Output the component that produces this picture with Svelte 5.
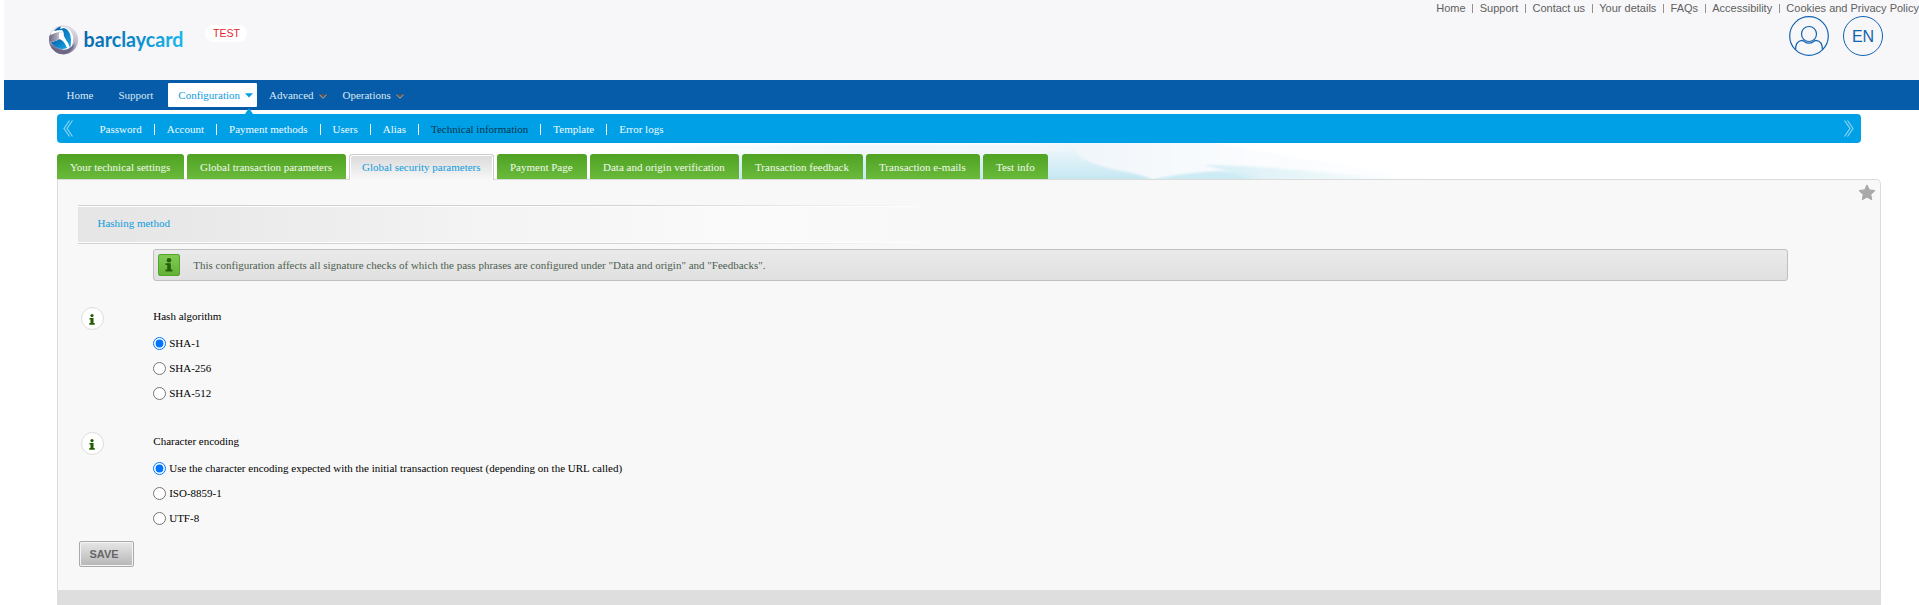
<script>
  const topLinks = ['Home', 'Support', 'Contact us', 'Your details', 'FAQs', 'Accessibility', 'Cookies and Privacy Policy'];
  const subItems = ['Password', 'Account', 'Payment methods', 'Users', 'Alias', 'Technical information', 'Template', 'Error logs'];
  const tabs = [
    { name: 'Your technical settings', width: 127 },
    { name: 'Global transaction parameters', width: 159 },
    { name: 'Global security parameters', width: 145, active: true },
    { name: 'Payment Page', width: 90 },
    { name: 'Data and origin verification', width: 149 },
    { name: 'Transaction feedback', width: 121 },
    { name: 'Transaction e-mails', width: 114 },
    { name: 'Test info', width: 65 }
  ];
  const groups = [
    { id: 'hash', title: 'Hash algorithm', options: ['SHA-1', 'SHA-256', 'SHA-512'] },
    {
      id: 'encoding',
      title: 'Character encoding',
      options: [
        'Use the character encoding expected with the initial transaction request (depending on the URL called)',
        'ISO-8859-1',
        'UTF-8'
      ]
    }
  ];
  let chosen = $state({ hash: 'SHA-1', encoding: groups[1].options[0] });
</script>

{#snippet arrow()}
  <svg class="arrow" width="8" height="5" viewBox="0 0 8 5"><path d="M.6 .3h6.8L4 4.2z" fill="#555" /><path d="M.4 .6L4 4.300 7.600 .6" fill="none" stroke="#d3b08e" stroke-width=".9" /></svg>
{/snippet}

<div class="page">
  <header>
    <svg class="logo" width="138" height="32" viewBox="0 0 138 32" role="img" aria-label="barclaycard">
      <defs>
        <linearGradient id="silver" x1=".7" y1="0" x2=".4" y2="1">
          <stop offset="0" stop-color="#e6e4ec" /><stop offset=".5" stop-color="#bbb7c8" /><stop offset="1" stop-color="#625d7b" />
        </linearGradient>
        <linearGradient id="wing" x1="0" y1="0" x2="1" y2="0">
          <stop offset="0" stop-color="#6b6682" /><stop offset="1" stop-color="#dddbe4" />
        </linearGradient>
        <linearGradient id="blue" x1="0" y1="0" x2="1" y2="1">
          <stop offset="0" stop-color="#075aa8" /><stop offset="1" stop-color="#12a8e4" />
        </linearGradient>
        <linearGradient id="word" x1="0" y1="0" x2="1" y2=".15">
          <stop offset="0" stop-color="#0864ab" /><stop offset=".55" stop-color="#0786c6" /><stop offset="1" stop-color="#1ab4ea" />
        </linearGradient>
      </defs>
      <circle cx="15.500" cy="15.800" r="14.600" fill="url(#silver)" />
      <path d="M3 9Q7 3 14 3q8 0 11 9 1 8-3 13-4 2-9 0-7-2-11-8l1-4z" fill="#fff" />
      <path d="M6 7q3-4 7-4.500L12 5l4-1q4 1 6 6 2 7 0 15-1-7-7-12 2-4-1-7-4 0-8 1z" fill="url(#blue)" />
      <path d="M3 18q6-1 8-3 5 1 8 9-5 2-9 0-5-2-7-6z" fill="url(#blue)" />
      <path d="M1.200 12q5-4 14-4.500Q11 11 11 15q-4 3.500-9.600 2.500z" fill="url(#wing)" />
      <path d="M11.500 8q2 0 3.500 2 3 5 3.500 9Q14 15 11 14.500q-1-3 .5-6.500z" fill="#fff" />
      <path d="M2 20q6 6 13 6 7 0 12-7-3 10.500-12 11Q6 30 2 20z" fill="#6c6787" />
      <text x="35.500" y="23" textLength="100" lengthAdjust="spacingAndGlyphs" fill="url(#word)">barclaycard</text>
    </svg>
    <span class="test">TEST</span>
    <div class="account">
      <nav class="top">
        {#each topLinks as link}<a href="#top">{link}</a>{/each}
      </nav>
      <div class="rounds">
        <svg width="40" height="40" viewBox="0 0 40 40" fill="none" stroke="#1264b0" stroke-width="1.2">
          <circle cx="20" cy="20" r="19.3" />
          <circle cx="20" cy="18" r="7.5" />
          <path d="M6.500 34c0-6 2.500-9.200 6.500-9.600 2 0 3 2.800 7 2.800s5-2.800 7-2.800c4 .4 6.500 3.600 6.500 9.600" />
        </svg>
        <span class="lang">EN</span>
      </div>
    </div>
  </header>

  <nav class="main">
    <a class="home" href="#top">Home</a>
    <a class="support" href="#top">Support</a>
    <a class="config" href="#top">Configuration<svg width="8" height="5" viewBox="0 0 8 5"><path d="M0 .3h8L4 4.500z" fill="#00a0e6" /></svg></a>
    <a class="adv" href="#top">Advanced{@render arrow()}</a>
    <a class="ops" href="#top">Operations{@render arrow()}</a>
  </nav>

  <nav class="sub">
    <svg class="pointer" width="8" height="6" viewBox="0 0 8 6"><path d="M4 0L8 6H0z" fill="#00a0e6" /></svg>
    <svg class="chev" width="10" height="17" viewBox="0 0 10 17"><path d="M6.500 .5L1 8.500l5.500 8M9.500 .5L4 8.500l5.500 8" /></svg>
    <ul>
      {#each subItems as item}
        <li><a class:current={item === 'Technical information'} href="#top">{item}</a></li>
      {/each}
    </ul>
    <svg class="chev" width="10" height="17" viewBox="0 0 10 17"><path d="M3.500 .5L9 8.500l-5.500 8M.5 .5L6 8.500l-5.500 8" /></svg>
  </nav>

  <div class="tabs">
    <svg class="sky" width="900" height="36" viewBox="0 0 900 36">
      <defs>
        <linearGradient id="haze" x1="0" y1="0" x2="1" y2="0">
          <stop offset="0" stop-color="#fff" /><stop offset=".3" stop-color="#f1f8fb" /><stop offset=".56" stop-color="#f1f6fa" /><stop offset=".75" stop-color="#fafcfe" /><stop offset="1" stop-color="#fff" />
        </linearGradient>
        <linearGradient id="wave" gradientUnits="userSpaceOnUse" x1="0" y1="4" x2="0" y2="36">
          <stop offset="0" stop-color="#eef7fb" /><stop offset="1" stop-color="#c5e7f2" />
        </linearGradient>
        <linearGradient id="fade" x1="0" y1="0" x2="1" y2="0">
          <stop offset="0" stop-color="#cdebf4" /><stop offset=".4" stop-color="#e2f4f8" /><stop offset="1" stop-color="#fff" />
        </linearGradient>
        <filter id="soft" x="-5%" y="-30%" width="110%" height="160%"><feGaussianBlur stdDeviation="1.300" /></filter>
      </defs>
      <path d="M0 40V8Q140 0 330 1T520 -4h110q80 20 270 44z" fill="url(#haze)" filter="url(#soft)" />
      <path d="M60 40V14h400l40-12 7 12q14 8 36 13 20 3 36 9v4z" fill="url(#wave)" filter="url(#soft)" />
      <path d="M582 40v-4q26-6 66-8 30 2 46 12z" fill="#cdebf4" filter="url(#soft)" />
      <path d="M630 22q70 0 220 18H680q-20-12-50-18z" fill="url(#fade)" opacity=".8" filter="url(#soft)" />
    </svg>
    {#each tabs as tab}
      <a class="tab" class:active={tab.active} href="#top" style:width="{tab.width}px">{tab.name}</a>
    {/each}
  </div>

  <main>
    <svg class="star" width="18" height="17" viewBox="0 0 18 17"><path d="M9 1.200l2.300 4.700 5.200.8-3.800 3.600.9 5.200L9 13l-4.600 2.500.9-5.200L1.500 6.700l5.200-.8z" fill="#a9a9a9" stroke="#a9a9a9" stroke-width="1.200" stroke-linejoin="round" /></svg>
    <h2><span>Hashing method</span></h2>
    <div class="notice">
      <span class="badge"><svg width="8" height="14" viewBox="0 0 8 14"><circle cx="4" cy="2.300" r="2.300" /><path d="M.5 5.200h5.300v6.300h1.600V13.500H.5v-2h1.700V7H.5z" /></svg></span>
      This configuration affects all signature checks of which the pass phrases are configured under "Data and origin" and "Feedbacks".
    </div>
    {#each groups as group}
      <section>
        <span class="info"><svg width="6" height="11" viewBox="0 0 6 11"><circle cx="3" cy="1.600" r="1.600" /><path d="M.5 4h4v5h1.200v1.800H.3V9h1.200V5.600h-1z" /></svg></span>
        <div class="fields">
          <h3>{group.title}</h3>
          {#each group.options as option}
            <label><input type="radio" name={group.id} value={option} bind:group={chosen[group.id]} />{option}</label>
          {/each}
        </div>
      </section>
    {/each}
    <button type="button">SAVE</button>
    <div class="foot"></div>
  </main>
</div>

<style>
  :global(body) { margin: 0; background: #fff; overflow: hidden; }
  .page { width: 1919px; height: 605px; overflow: hidden; box-sizing: border-box; padding-left: 4px; background: #fff; font: 11px/13px "Liberation Serif", "Times New Roman", serif; color: #000; }
  a { color: inherit; text-decoration: none; white-space: nowrap; }
  svg { display: block; flex: none; }

  header { height: 80px; background: #f7f7f9; display: flex; align-items: flex-start; }
  .logo { margin: 24px 0 0 44px; }
  .logo text { font: 700 20px Lato, sans-serif; }
  .test { margin: 25px 0 0 19px; width: 42px; height: 17px; border-radius: 9px; background: #fff; color: #e2262f; font: 10.600px/17px "Liberation Sans", Arial, sans-serif; text-align: center; text-indent: 1px; }
  .account { margin-left: auto; font-family: "Liberation Sans", Arial, sans-serif; }
  .top { display: flex; height: 16px; align-items: center; justify-content: flex-end; color: #606060; }
  .top a + a { display: flex; align-items: center; }
  .top a + a::before { content: ""; width: 1px; height: 9px; margin: 0 6.500px 0 6.700px; background: #919191; }
  .rounds { display: flex; gap: 14px; justify-content: flex-end; padding-right: 36px; }
  .lang { width: 40px; height: 40px; box-sizing: border-box; border: 1.200px solid #1264b0; border-radius: 50%; color: #1264b0; font-size: 16px; line-height: 40px; text-align: center; }

  .main { height: 30px; background: #065ca8; color: #d9e8f5; display: flex; align-items: center; }
  .main a { display: flex; align-items: center; height: 24px; }
  .home { margin-left: 62.500px; width: 52px; }
  .support { width: 49.500px; }
  .config { box-sizing: border-box; width: 89px; padding-left: 10.300px; background: #fff; color: #0e9cdc; border-radius: 1px; }
  .config svg { margin: 1px 0 0 4.600px; }
  .adv { margin-left: 12px; width: 73.500px; }
  .arrow { margin: 2px 0 0 5px; }

  .sub { position: relative; display: flex; align-items: center; margin: 4px 58px 0 53px; height: 29px; box-sizing: border-box; padding: 0 7px 0 6px; border-radius: 4px; background: #00a0e6; color: #f2faff; }
  .pointer { position: absolute; left: 188px; top: -6px; }
  .chev { fill: none; stroke: #8ad3f4; stroke-width: 1.200; }
  .sub ul { display: flex; flex: 1; align-items: center; list-style: none; margin: 2px 0 0 14.500px; padding: 0; }
  .sub li { display: flex; align-items: center; padding-left: 12px; }
  .sub li:not(:last-child)::after { content: ""; width: 1px; height: 11px; margin-left: 12.050px; background: #fff; }
  .current { color: #06364f; }

  .tabs { position: relative; display: flex; gap: 3px; height: 36px; padding: 11px 0 0 53px; box-sizing: border-box; }
  .sky { position: absolute; left: 569px; top: 0; }
  .tab { position: relative; height: 25px; box-sizing: border-box; padding: 7px 0 0 13px; border-radius: 3px 3px 0 0; background: linear-gradient(#4fa222, #6aba3c); color: #f2f9ee; }
  .tab.active { height: 26px; z-index: 1; padding: 6px 0 0 12px; border: 1px solid #ccc; border-bottom: 0; background: linear-gradient(#dbd9da, #f8f8f8); box-shadow: inset 1px 1px #fff, inset -1px 0 #fff; color: #0e9cdc; }

  main { position: relative; margin: 0 38px 0 53px; height: 426px; box-sizing: border-box; border: 1px solid #dbdbdb; border-top-right-radius: 5px; border-bottom: 0; background: #f8f8f8; padding: 25px 20px 0; display: flex; flex-direction: column; }
  .star { position: absolute; right: 4px; top: 4px; }
  h2, h3 { margin: 0; font: inherit; }
  h2 { height: 39px; box-sizing: border-box; padding: 1px 0; width: 840px; background: linear-gradient(90deg, #d2d2d2 65%, #f8f8f8); color: #0e9cdc; }
  h2 span { display: block; height: 37px; box-sizing: border-box; padding: 10px 0 0 19.500px; border: solid #fdfdfd; border-width: 1px 0; background: linear-gradient(90deg, #e5e5e5, #e8e8e8 12%, #f4f4f4 50%, #fafafa 78%, #f8f8f8); }
  .notice { margin: 5px 72px 0 75px; height: 32px; box-sizing: border-box; border: 1px solid #bfbfbf; border-radius: 3px; background: linear-gradient(#eaeaea, #e1e0e0); display: flex; align-items: center; padding-left: 4px; color: #4c5e50; }
  .badge { width: 22px; height: 22px; box-sizing: border-box; margin-right: 13.300px; border: 1px solid #51a52c; border-radius: 2px; background: linear-gradient(#82cb55, #62b136); display: flex; align-items: center; justify-content: center; }
  .badge svg { fill: #236008; margin: -1px 1px 0 0; }
  section { display: flex; height: 125px; margin: 0; }
  .notice + section { margin-top: 26px; }
  .info { width: 23px; height: 23px; box-sizing: border-box; margin: 0 49.300px 0 3px; border: 1px solid #dcdcdc; border-radius: 50%; background: #fff; display: flex; align-items: center; justify-content: center; }
  .info svg { fill: #235c04; margin: 1px 1px 0 0; }
  .fields { display: flex; flex-direction: column; }
  h3 { height: 24px; padding-top: 3px; box-sizing: border-box; }
  label { display: flex; align-items: center; height: 25px; }
  input { width: 13px; height: 13px; margin: 0 2.900px 0 0; }
  button { flex: none; margin: -16px 0 0 1px; width: 55px; height: 26px; padding: 0 5px 0 0; border: 1px solid #aaa; border-radius: 2px; background: linear-gradient(#e7e7e7, #b6b6b6); box-shadow: inset 0 0 0 1px #f4f4f4; color: #666; font: bold 11px "Liberation Sans", Arial, sans-serif; }
  .foot { height: 15px; margin: 23px -21px 0; background: #dedede; flex: none; }
</style>
